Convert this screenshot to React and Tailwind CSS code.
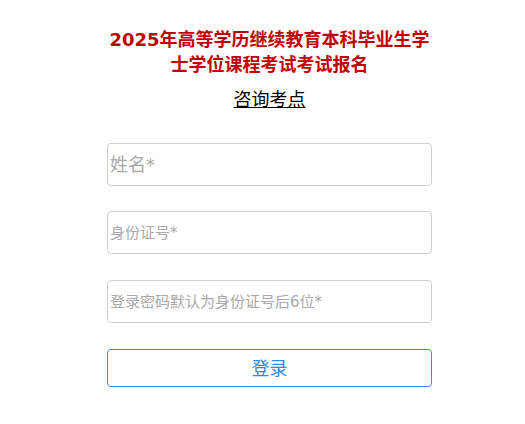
import React from 'react';

const font = { fontFamily: '"DejaVu Sans", "Noto Sans CJK SC", sans-serif' };

export default function App() {
    return (
        <div className="min-h-screen bg-white" style={font}>
            <div className="w-[325px] ml-[107px] pt-[27px]">
                {/* Title */}
                <h1 className="text-center text-[18px] leading-[25px] font-bold text-[#c00000]">
                    2025年高等学历继续教育本科毕业生学士学位课程考试考试报名
                </h1>
                <div className="mt-[10px] text-center">
                    <a href="#" className="text-[18px] leading-[25px] text-black underline">咨询考点</a>
                </div>

                {/* Form */}
                <form className="mt-[30px] flex flex-col" onSubmit={(e) => e.preventDefault()}>
                    <input
                        type="text"
                        placeholder="姓名*"
                        className="h-[43px] w-full rounded border border-[#cfcfd4] px-[2px] text-[18px] outline-none placeholder:text-[#a9a9a9]"
                    />
                    <input
                        type="text"
                        placeholder="身份证号*"
                        className="mt-[25px] h-[43px] w-full rounded border border-[#cfcfd4] px-[2px] text-[15px] outline-none placeholder:text-[#a9a9a9]"
                    />
                    <input
                        type="password"
                        placeholder="登录密码默认为身份证号后6位*"
                        className="mt-[26px] h-[43px] w-full rounded border border-[#cfcfd4] px-[2px] text-[15px] outline-none placeholder:text-[#a9a9a9]"
                    />
                    <button
                        type="submit"
                        className="mt-[26px] h-[38px] w-full rounded border border-[#3a8ee6] bg-white text-[18px] text-[#2b8ae8]"
                    >
                        登录
                    </button>
                </form>
            </div>
        </div>
    );
}
